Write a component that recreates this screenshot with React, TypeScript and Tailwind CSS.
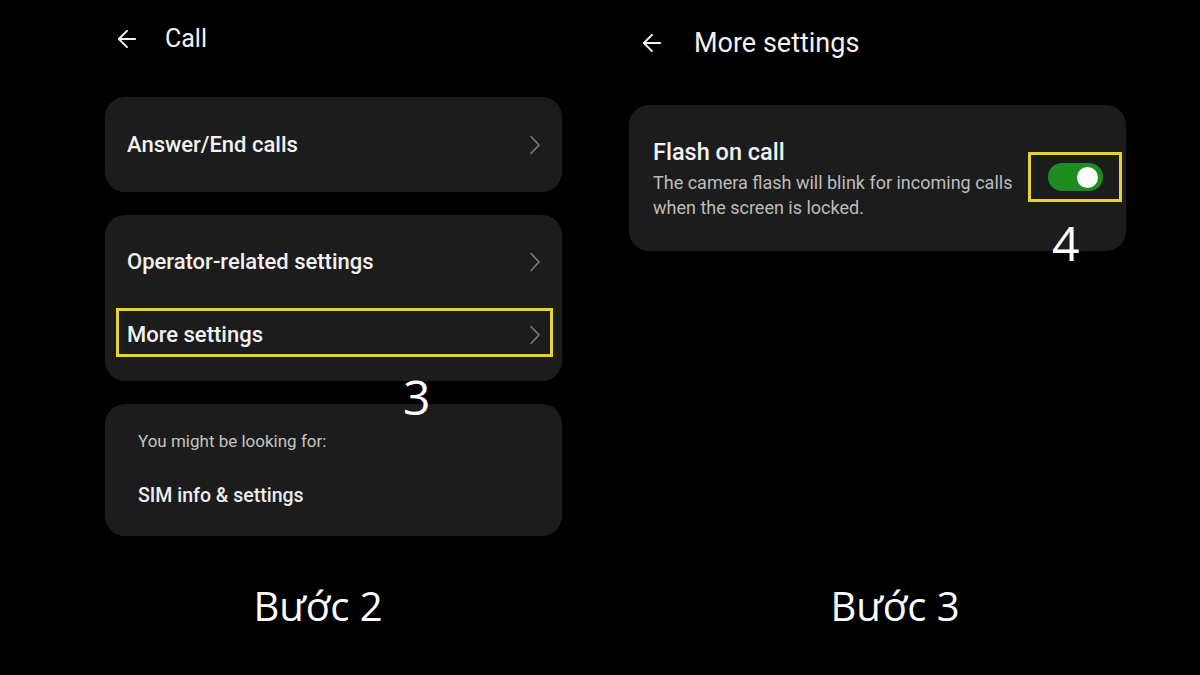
import { ArrowLeft } from 'lucide-react'

const phone = { fontFamily: 'Roboto, "Noto Sans", sans-serif' }
const caption = { fontFamily: '"Open Sans", "Noto Sans", sans-serif' }

function Chevron() {
  return (
    <svg width="14" height="20" viewBox="0 0 14 20" fill="none" className="text-[#7c7c7c]">
      <path d="M3 1.5 L11 10 L3 18.5" stroke="currentColor" strokeWidth="1.6" strokeLinecap="round" strokeLinejoin="round" />
    </svg>
  )
}

function Row({ label, boxed }: { label: string; boxed?: boolean }) {
  return (
    <div className="relative flex h-[73px] items-center justify-between pl-[22px] pr-[20px]">
      <span className="text-[22px] font-medium text-[#f2f2f2]">{label}</span>
      <Chevron />
      {boxed && (
        <div className="absolute left-[11px] right-[9px] top-[10px] h-[49px] border-[3px] border-[#e6d235]" />
      )}
    </div>
  )
}

export default function App() {
  return (
    <div className="relative h-[675px] w-[1200px] overflow-hidden bg-black" style={phone}>
      <div className="flex">
        {/* step 2 screen */}
        <div className="relative ml-[105px] w-[457px]">
          <div className="flex h-[80px] items-center pb-[2px]">
            <ArrowLeft className="ml-[8px] h-[28px] w-[28px] text-[#f2f2f2]" strokeWidth={1.7} />
            <span className="ml-[24px] text-[25px] text-[#f2f2f2]">Call</span>
          </div>
          <div className="mt-[17px] flex h-[95px] items-center justify-between rounded-[20px] bg-[#1c1c1c] pl-[22px] pr-[20px]">
            <span className="text-[22px] font-medium text-[#f2f2f2]">Answer/End calls</span>
            <Chevron />
          </div>
          <div className="mt-[23px] rounded-[20px] bg-[#1c1c1c] py-[10px]">
            <Row label="Operator-related settings" />
            <Row label="More settings" boxed />
          </div>
          <div className="mt-[23px] flex h-[132px] flex-col rounded-[20px] bg-[#1c1c1c] pl-[33px] pt-[25px]">
            <span className="text-[17px] text-[#c4c4c4]">You might be looking for:</span>
            <span className="mt-[26px] text-[19.5px] font-medium text-[#ececec]">SIM info &amp; settings</span>
          </div>
          <span className="absolute left-[298px] top-[373px] text-[48px] leading-none text-white" style={caption}>
            3
          </span>
        </div>

        {/* step 3 screen */}
        <div className="relative ml-[67px] w-[497px]">
          <div className="flex h-[86px] items-center">
            <ArrowLeft className="ml-[9px] h-[28px] w-[28px] text-[#f2f2f2]" strokeWidth={1.7} />
            <span className="ml-[28px] text-[27px] text-[#f2f2f2]">More settings</span>
          </div>
          <div className="mt-[19px] flex h-[146px] items-center rounded-[20px] bg-[#1c1c1c] pl-[24px] pr-[4px]">
            <div className="flex flex-col">
              <span className="text-[23.5px] font-medium leading-[30px] text-[#f2f2f2]">Flash on call</span>
              <span className="mt-[3px] w-[374px] text-[18px] leading-[25px] text-[#bdbdbd]">
                The camera flash will blink for incoming calls when the screen is locked.
              </span>
            </div>
            <div className="ml-auto mb-[2px] flex h-[50px] w-[94px] items-center justify-center border-[3px] border-[#e6d235]">
              <div className="flex h-[28px] w-[55px] items-center justify-end rounded-full bg-[#1f8c22] pr-[5px]">
                <div className="h-[21px] w-[21px] rounded-full bg-white" />
              </div>
            </div>
          </div>
          <span className="absolute left-[423px] top-[219px] text-[48px] leading-none text-white" style={caption}>
            4
          </span>
        </div>
      </div>

      <div className="mt-[40px] flex text-[40px] text-white" style={caption}>
        <div className="w-[636px] text-center">Bước 2</div>
        <div className="w-[518px] text-center">Bước 3</div>
      </div>
    </div>
  )
}
